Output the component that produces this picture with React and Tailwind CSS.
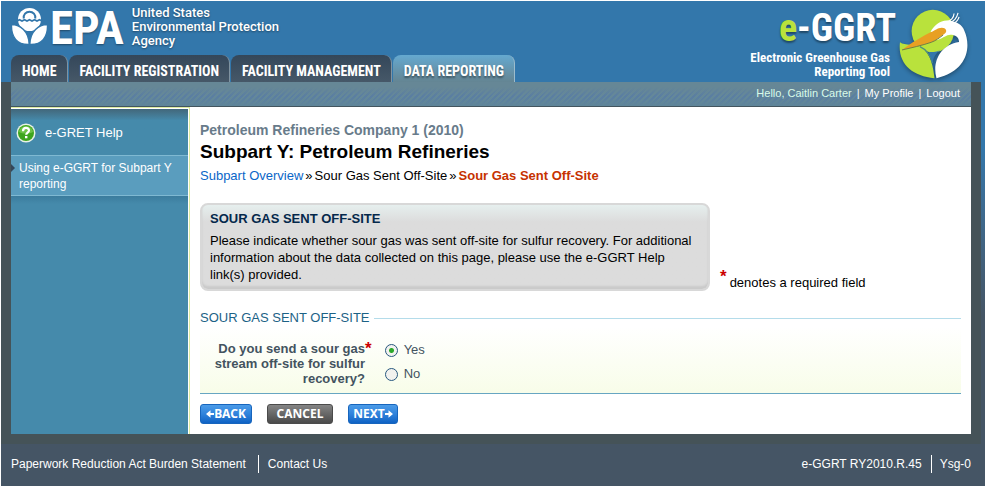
import React, { useState } from "react";

const tabs = [
  { label: "HOME", active: false },
  { label: "FACILITY REGISTRATION", active: false },
  { label: "FACILITY MANAGEMENT", active: false },
  { label: "DATA REPORTING", active: true },
];

function FlowerLogo() {
  return (
    <svg viewBox="0 0 36 38" className="w-9 h-[38px] mt-px" aria-hidden="true">
      <circle cx="18.500" cy="12.500" r="11.500" fill="#fff" />
      <path d="M12.800 11.500a5.800 5.800 0 1 1 11.400 0" stroke="#3377ab" strokeWidth="2" fill="none" />
      <path d="M6 14l2.500-1.200 2.500 1.200 2.500-1.200 2.500 1.200 2.500-1.200 2.500 1.200 2.500-1.200 2.500 1.200 2.500-1.200 2.500 1.200" stroke="#3377ab" strokeWidth="1.800" fill="none" />
      <path d="M0.500 17.500C9 17.500 18 24 18.200 37.500C6 38 0 30 0.500 17.500z" fill="#fff" stroke="#3377ab" strokeWidth="1.400" />
      <path d="M36.500 17.500C28 17.500 19 24 18.800 37.500C31 38 37 30 36.500 17.500z" fill="#fff" stroke="#3377ab" strokeWidth="1.400" />
    </svg>
  );
}

function HeronLogo() {
  return (
    <svg viewBox="9 12 211 222" className="w-[70px] h-[74px] drop-shadow-[0_2px_2px_rgba(0,0,0,0.35)]" aria-hidden="true">
      <circle cx="111" cy="87" r="64" fill="#b9e23c" />
      <path d="M12 121C26 132 58 126 76 136C106 156 112 196 116 229C48 224 4 184 12 121z" fill="#b9e23c" />
      <path d="M72 134C90 142 104 160 110 184" stroke="#4f8f7c" strokeWidth="4" fill="none" />
      <path d="M110 184C112 166 124 148 140 139L126 148C118 151 104 151 98 149z" fill="#3377ab" />
      <path d="M104 90C114 70 136 52 160 56C182 58 200 68 206 86C226 130 220 206 122 229C108 180 134 128 190 120C190 104 178 98 164 98C152 98 142 108 124 114z" fill="#fff" />
      <path d="M152 59C166 58 174 46 175 34M162 60C176 58 184 44 187 32M172 64C182 60 188 52 190 44" stroke="#fff" strokeWidth="3.500" fill="none" />
      <path d="M18 144C44 124 78 104 106 90C118 86 124 77 138 77C154 77 156 92 142 98C132 106 122 115 106 121C80 130 44 138 18 144z" fill="#e8a023" />
      <path d="M18 144C44 138 80 130 106 121C120 116 132 107 142 99" stroke="#5d7048" strokeWidth="2.500" fill="none" />
    </svg>
  );
}

function Header() {
  return (
    <header className="flex justify-between h-[81px]">
      <div className="flex flex-col justify-between pl-[10px]">
        <a href="#" className="flex items-start pt-[5px] text-white">
          <FlowerLogo />
          <span className="pl-[3px] text-[47px] leading-[44px] font-bold font-['Roboto_Condensed','Liberation_Sans',sans-serif] [text-shadow:0_1px_2px_rgba(0,0,0,0.4)]">
            EPA
          </span>
          <span className="pl-2 text-[13px] leading-[14px] font-medium font-['Roboto','Liberation_Sans',sans-serif] [text-shadow:0_1px_2px_rgba(0,0,0,0.4)]">
            United States
            <br />
            Environmental Protection
            <br />
            Agency
          </span>
        </a>
        <nav className="flex gap-px">
          {tabs.map((tab) => (
            <a
              key={tab.label}
              href="#"
              className={
                "pl-[11px] pr-[10px] h-[27px] leading-[32px] rounded-t-lg border-r text-[14px] font-bold text-white whitespace-nowrap font-['Roboto_Condensed','Liberation_Sans',sans-serif] " +
                (tab.active
                  ? "bg-linear-to-b from-[#65a9d0] to-[#648593] border-[#9dbccc] [text-shadow:0_2px_2px_rgba(0,0,0,0.4)]"
                  : "bg-linear-to-b from-[#34475a] to-[#465868] border-[#8093a0]")
              }
            >
              {tab.label}
            </a>
          ))}
        </nav>
      </div>

      <a href="#" className="flex items-start pt-[5px] pr-4 text-white">
        <span className="flex flex-col items-end pr-[3px] font-bold font-['Roboto_Condensed','Liberation_Sans',sans-serif]">
          <span className="text-[38px] leading-[45px] [text-shadow:0_2px_2px_rgba(0,0,0,0.4)]">
            <span className="text-[#b9e23c]">e</span>-GGRT
          </span>
          <span className="pr-[6px] text-[13px] leading-[14px] text-right">
            Electronic Greenhouse Gas
            <br />
            Reporting Tool
          </span>
        </span>
        <HeronLogo />
      </a>
    </header>
  );
}

function UserBar() {
  return (
    <div className="flex justify-end items-center gap-[5px] h-[25px] pr-[11px] pb-[2px] border-b border-[#43555f] bg-[#64879a] bg-[linear-gradient(to_bottom,#668796_20%,transparent_60%,#5f8599),repeating-linear-gradient(135deg,#5a7ea2_0,#5a7ea2_2px,#64889a_2px,#64889a_4px)] text-[11px] text-white">
      <span className="text-[#d9fbe9]">Hello, Caitlin Carter</span>
      <span>|</span>
      <a href="#">My Profile</a>
      <span>|</span>
      <a href="#">Logout</a>
    </div>
  );
}

function Sidebar() {
  return (
    <aside className="w-[179px] shrink-0 pt-px pr-px border-t border-r border-[#dceba0] bg-white">
      <div className="h-full bg-[#458aab]">
        <a href="#" className="flex items-center gap-[9px] h-[46px] pl-[5px] pt-[2px] text-white bg-linear-to-b from-[#42677a] to-[#458aab] to-25%">
          <svg viewBox="0 0 20 20" className="size-5" aria-hidden="true">
            <circle cx="10" cy="10" r="9.500" fill="#e9f2e6" />
            <circle cx="10" cy="10" r="8" fill="#3da51e" />
            <path d="M3 9a7 6 0 0 1 14 0c-4 2-10 2-14 0z" fill="#6cc247" />
            <path d="M7 8.200c0-4.200 6-4.200 6-.800 0 2.200-2.800 2.200-2.800 4.300" stroke="#fff" strokeWidth="2.200" fill="none" />
            <rect x="9" y="13" width="2.400" height="2.300" fill="#fff" />
          </svg>
          <span>e-GRET Help</span>
        </a>
        <a href="#" className="flex border-y border-[#7fb9d2] bg-[#5a9dbe] pt-1 pb-[2px] text-white">
          <svg viewBox="0 0 4 8" className="w-1 h-2 mt-1 mr-1 shrink-0" aria-hidden="true">
            <path d="M0 0l4 4-4 4z" fill="#34475a" />
          </svg>
          <span className="text-[12px] leading-4 pb-px">
            Using e-GGRT for Subpart Y reporting
          </span>
        </a>
        <div className="h-2 bg-linear-to-b from-[#3b7c9d] to-[#458aab]" />
      </div>
    </aside>
  );
}

function RequiredMark() {
  return <span className="text-[#cc0000] font-bold text-[17px] leading-4">*</span>;
}

const buttonBase =
  "flex items-center justify-center h-5 rounded-[3px] border text-[12px] leading-none font-bold text-white font-['Noto_Sans','Open_Sans',sans-serif] ";
const blueButton =
  "border-[#1765bd] bg-linear-to-b from-[#4b9be8] via-[#2f83dc] to-[#0e62c4] ";

function Arrow({ flip }) {
  return (
    <svg viewBox="0 0 8 8" className={flip ? "size-2 rotate-180" : "size-2"} aria-hidden="true">
      <path d="M0 3h3.500V0.200L8 4 3.500 7.800V5H0z" fill="#fff" />
    </svg>
  );
}

function SourGasForm() {
  const [answer, setAnswer] = useState("yes");

  return (
    <form onSubmit={(e) => e.preventDefault()}>
      <div className="flex items-center gap-1 mt-[19px] h-4">
        <h2 className="text-[#1c6286]">SOUR GAS SENT OFF-SITE</h2>
        <div className="grow h-px bg-[#b4dcea]" />
      </div>

      <div
        role="radiogroup"
        aria-labelledby="sour-gas-question"
        className="flex h-[67px] border-b border-[#67a6c2] bg-linear-to-b from-white to-[#f8fde9] mt-px pt-[14px] text-[#43535f]"
      >
        <div id="sour-gas-question" className="w-[165px] font-bold text-right leading-[15px]">
          Do you send a sour gas stream off-site for sulfur recovery?
        </div>
        <RequiredMark />
        <div className="flex flex-col gap-2 pl-[13px] pt-px">
          {["Yes", "No"].map((option) => (
            <label key={option} className="flex items-center gap-[6px] h-4">
              <input
                type="radio"
                name="sourGas"
                value={option.toLowerCase()}
                checked={answer === option.toLowerCase()}
                onChange={(e) => setAnswer(e.target.value)}
                className="appearance-none size-[13px] rounded-full border border-[#28587f] bg-[#f2f2ef] checked:bg-[radial-gradient(circle,#2aa82a_0,#2aa82a_2px,#f2f2ef_3px)]"
              />
              {option}
            </label>
          ))}
        </div>
      </div>

      <div className="flex gap-[15px] mt-[10px] mb-[10px]">
        <button type="button" className={buttonBase + blueButton + "w-[52px]"}>
          <Arrow flip />
          BACK
        </button>
        <button
          type="button"
          className={buttonBase + "w-[66px] border-[#4b4b4b] bg-linear-to-b from-[#858585] to-[#4a4a4a]"}
        >
          CANCEL
        </button>
        <button type="submit" className={buttonBase + blueButton + "w-[50px]"}>
          NEXT
          <Arrow />
        </button>
      </div>
    </form>
  );
}

function Main() {
  return (
    <main className="grow pt-[14px] pl-[10px] pr-[10px]">
      <div className="text-[14px] leading-[18px] font-bold text-[#687b8a]">
        Petroleum Refineries Company 1 (2010)
      </div>
      <h1 className="text-[19px] leading-[26px] font-bold text-black">
        Subpart Y: Petroleum Refineries
      </h1>
      <nav className="text-[13px] leading-[21px]">
        <a href="#" className="text-[#0a66c8]">Subpart Overview</a>
        <span className="px-[2px]">»</span>
        <a href="#">Sour Gas Sent Off-Site</a>
        <span className="px-[2px]">»</span>
        <strong className="text-[#c63200]">Sour Gas Sent Off-Site</strong>
      </nav>

      <div className="flex items-end gap-[10px] mt-[17px]">
        <section className="w-[510px] h-[88px] px-2 pt-[6px] rounded-lg border-2 border-[#d8d8d8] bg-linear-to-b from-[#e6efee] to-[#dcdcdc] to-20% shadow-[inset_0_-3px_2px_#cacaca]">
          <h2 className="font-bold leading-4 text-[#04284b]">SOUR GAS SENT OFF-SITE</h2>
          <p className="mt-[5px] leading-[17px]">
            Please indicate whether sour gas was sent off-site for sulfur recovery. For additional
            information about the data collected on this page, please use the e-GGRT Help link(s)
            provided.
          </p>
        </section>
        <div className="flex items-start gap-[3px]">
          <RequiredMark />
          <span className="pt-[6px] leading-4">denotes a required field</span>
        </div>
      </div>

      <SourGasForm />
    </main>
  );
}

export default function App() {
  return (
    <div className="pt-px pl-px bg-white text-[13px] text-black font-['Liberation_Sans',Arial,sans-serif]">
      <div className="min-h-[calc(100vh-1px)] flex flex-col bg-[#455565] bg-linear-to-b from-[#3377ab] from-30% to-[#455565] to-65%">
        <Header />
        <div className="grow flex flex-col mr-1 px-[10px] pb-[10px] bg-[#455358]">
          <UserBar />
          <div className="grow flex bg-white">
            <Sidebar />
            <Main />
          </div>
        </div>
        <footer className="flex justify-between items-center h-[42px] pl-[10px] pr-[14px] pb-[3px] text-[12px] text-white">
          <div className="flex items-center">
            <a href="#" className="pr-3 border-r border-white">Paperwork Reduction Act Burden Statement</a>
            <a href="#" className="pl-[9px]">Contact Us</a>
          </div>
          <div className="flex items-center">
            <span className="pr-[9px] border-r border-white">e-GGRT RY2010.R.45</span>
            <span className="pl-2">Ysg-0</span>
          </div>
        </footer>
      </div>
    </div>
  );
}
